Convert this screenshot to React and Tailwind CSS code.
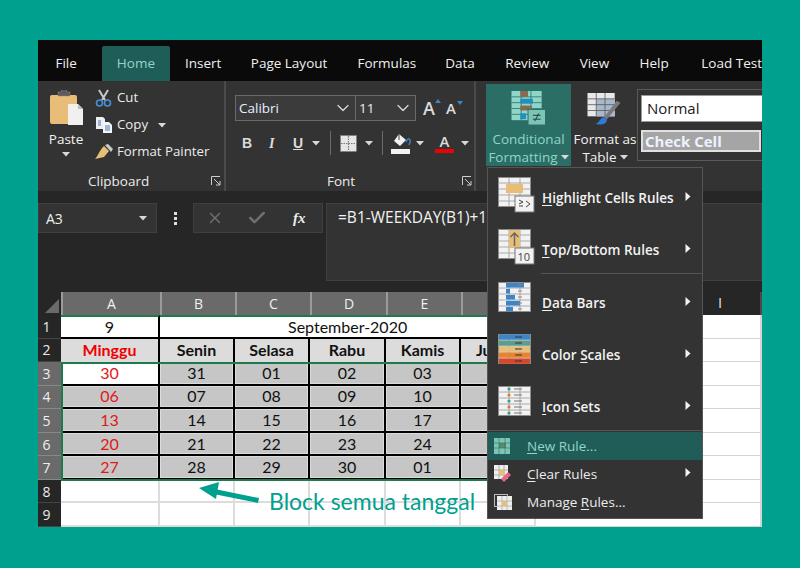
import { ChevronDown, Check, X } from "lucide-react";

const uiFont = "font-['Open_Sans','Noto_Sans',sans-serif]";
const sheetFont = "font-['Lato','Liberation_Sans',sans-serif]";

const Caret = ({ className = "" }) => (
  <svg width="8" height="5" viewBox="0 0 8 5" className={className}>
    <path d="M0 0h8L4 4.5z" fill="#d8d8d8" />
  </svg>
);

const SubArrow = () => (
  <svg width="6" height="10" viewBox="0 0 6 10" className="absolute left-[197px] top-1/2 -translate-y-[65%]">
    <path d="M0.5 0.5L5.5 5L0.5 9.5z" fill="#f2f2f2" />
  </svg>
);

const Launcher = ({ className = "" }) => (
  <svg width="10" height="10" viewBox="0 0 10 10" className={className}>
    <path d="M0.5 9V.5H9M3 3l6 6M9 5v4H5" fill="none" stroke="#cfcfcf" strokeWidth="1" />
  </svg>
);

const PasteIcon = () => (
  <svg width="34" height="36" viewBox="0 0 34 36">
    <rect x="1" y="5" width="27" height="29" rx="2" fill="#e8bd78" />
    <path d="M9 6V2h3a3 3 0 0 1 6 0h3v4z" fill="#5b5b5b" stroke="#888" strokeWidth="0.5" />
    <path d="M19 14h10l5 5v16H19z" fill="#f0f0f0" />
    <path d="M29 14v5h5" fill="#bdbdbd" />
  </svg>
);

const CutIcon = () => (
  <svg width="18" height="18" viewBox="0 0 18 18">
    <path d="M4 1l6 10M13 1L7 11" stroke="#c9c9c9" strokeWidth="2" fill="none" />
    <circle cx="4.5" cy="14" r="3" fill="none" stroke="#4a90d9" strokeWidth="1.6" />
    <circle cx="12.5" cy="14" r="3" fill="none" stroke="#4a90d9" strokeWidth="1.6" />
  </svg>
);

const CopyIcon = () => (
  <svg width="18" height="18" viewBox="0 0 18 18">
    <path d="M1 1h7l2 2v10H1z" fill="#eee" />
    <path d="M3 5h3M3 7h3M3 9h3" stroke="#3d7fc4" strokeWidth="1.2" />
    <path d="M8 6h6l3 3v8H8z" fill="#f5f5f5" />
    <path d="M10 10h5M10 12h5M10 14h5" stroke="#3d7fc4" strokeWidth="1.2" />
  </svg>
);

const BrushIcon = () => (
  <svg width="20" height="16" viewBox="0 0 20 16">
    <path d="M10 2l5 5-5 6-9 2c3-3 4-8 9-13z" fill="#e8bd78" />
    <path d="M11 1l3-1 5 5-2 3z" fill="#c9c9c9" />
  </svg>
);

const BordersIcon = () => (
  <svg width="17" height="17" viewBox="0 0 17 17">
    <rect x="0.5" y="0.5" width="16" height="16" fill="#e6e6e6" />
    <path d="M8.5 1v15M1 8.5h15" stroke="#7a7a7a" strokeWidth="1.2" strokeDasharray="1.5 1" />
    <path d="M0.5 .5h16v16H.5z" fill="none" stroke="#7a7a7a" strokeDasharray="1.5 1" />
  </svg>
);

const FillIcon = () => (
  <svg width="20" height="21" viewBox="0 0 20 21">
    <path d="M8 1l7 6-6 6-6-5z" fill="#f2f2f2" />
    <path d="M8 1v6" stroke="#444" strokeWidth="1" />
    <path d="M15 9c1-3 3-4 4-2s-.5 3-1 5" stroke="#3d7fc4" strokeWidth="1.6" fill="none" />
    <rect x="0" y="16" width="19" height="5" fill="#f2f2f2" />
  </svg>
);

const GridCells = ({ rows = 5, cols = 3, size = 33, h = 30, children }) => {
  const cw = size / cols;
  const ch = h / rows;
  const lines = [];
  for (let i = 1; i < cols; i++) lines.push(<path key={"c" + i} d={`M${cw * i} 0V${h}`} stroke="#9a9a9a" strokeWidth="0.8" />);
  for (let i = 1; i < rows; i++) lines.push(<path key={"r" + i} d={`M0 ${ch * i}H${size}`} stroke="#9a9a9a" strokeWidth="0.8" />);
  return (
    <svg width={size + 3} height={h + 6} viewBox={`0 0 ${size + 3} ${h + 6}`} className="overflow-visible">
      <rect x="0.5" y="0.5" width={size - 1} height={h - 1} fill="#f2f2f2" stroke="#8c8c8c" />
      {lines}
      {children}
    </svg>
  );
};

const HighlightIcon = () => (
  <GridCells>
    <rect x="8" y="7" width="17" height="9" fill="#e8bd78" />
    <rect x="17" y="19" width="19" height="16" fill="#f2f2f2" stroke="#777" />
    <path d="M21 23l4 2-4 2M21 29h4M28 24l4 3-4 3" stroke="#444" strokeWidth="1" fill="none" />
  </GridCells>
);

const TopBottomIcon = () => (
  <GridCells>
    <rect x="11" y="1" width="11" height="18" fill="#e8bd78" />
    <path d="M16.5 17V4M12.5 8l4-4 4 4" stroke="#666" strokeWidth="1.5" fill="none" />
    <rect x="17" y="19" width="19" height="16" fill="#f2f2f2" stroke="#777" />
    <text x="19.5" y="32" fontSize="11" fill="#444" fontFamily="Open Sans">10</text>
  </GridCells>
);

const DataBarsIcon = () => (
  <GridCells>
    {[[1, 18], [7, 4], [13, 9], [19, 14], [25, 7]].map(([y, w]) => (
      <rect key={y} x="8" y={y} width={w} height="4.5" fill="#3d85c6" />
    ))}
    {[3, 9, 15, 21, 27].map((y) => (
      <path key={y} d={`M20 ${y}h4`} stroke="#888" strokeWidth="1" />
    ))}
  </GridCells>
);

const ColorScalesIcon = () => (
  <GridCells>
    {[["#3d85c6", 0], ["#5c9e8d", 6], ["#e8bd78", 12], ["#e8842c", 18], ["#d9472b", 24]].map(([c, y]) => (
      <g key={y}>
        <rect x="1" y={y + 0.5} width="31" height="5.2" fill={c} />
        <path d={`M17 ${y + 3}h7`} stroke="#333" strokeWidth="1" />
      </g>
    ))}
  </GridCells>
);

const IconSetsIcon = () => (
  <GridCells>
    {[["#3f9c83", 3], ["#e8752c", 9], ["#3f9c83", 15], ["#e8752c", 21], ["#3f9c83", 27]].map(([c, y]) => (
      <g key={y}>
        <circle cx="11" cy={y} r="1.6" fill={c} />
        <path d={`M16 ${y}h8`} stroke="#777" strokeWidth="1" />
      </g>
    ))}
  </GridCells>
);

const TabItem = ({ label, className = "" }) => (
  <div className={`h-[35px] flex items-center justify-center ${className}`}>{label}</div>
);

const ClipboardGroup = () => (
  <div className="w-[188px] h-full relative flex border-r-2 border-[#4a4a4a] shrink-0">
    <div className="w-[56px] pt-[9px] flex flex-col items-center">
      <PasteIcon />
      <div className="mt-[4px] text-[13.5px] leading-[18px] text-[#f2f2f2]">Paste</div>
      <Caret className="mt-[4px]" />
    </div>
    <div className="pt-[7px] flex flex-col gap-[7px] text-[13.25px] text-[#ececec] ml-[1px]">
      <div className="flex items-center gap-[4px] h-[20px]"><CutIcon /> Cut</div>
      <div className="flex items-center gap-[4px] h-[20px]"><CopyIcon /> Copy <Caret className="ml-[6px]" /></div>
      <div className="flex items-center gap-[3px] h-[20px] -ml-[1px] whitespace-nowrap"><BrushIcon /> Format Painter</div>
    </div>
    <div className="absolute left-[50px] bottom-0 text-[13.5px] text-[#ececec]">Clipboard</div>
    <Launcher className="absolute left-[173px] bottom-[5px]" />
  </div>
);

const FontGroup = () => (
  <div className="w-[250px] h-full relative border-r-2 border-[#4a4a4a] shrink-0 pl-[9px] pt-[14px]">
    <div className="flex items-center h-[26px]">
      <div className="w-[121px] h-full border border-[#6a6a6a] bg-[#3b3b3b] flex items-center justify-between pl-[3px] pr-[2px]">
        <span className="text-[13.5px] text-[#e8f0ff]">Calibri</span>
        <ChevronDown size={20} color="#d8d8d8" strokeWidth={1.5} />
      </div>
      <div className="w-[60px] h-full border border-l-0 border-[#6a6a6a] bg-[#3b3b3b] flex items-center justify-between pl-[3px] pr-[2px]">
        <span className="text-[13.5px] text-[#e8f0ff]">11</span>
        <ChevronDown size={20} color="#d8d8d8" strokeWidth={1.5} />
      </div>
      <div className="ml-[7px] text-[18px] font-semibold text-[#dcdcdc] relative">
        A<span className="absolute -right-[6px] top-[4px] w-0 h-0 border-x-[3px] border-x-transparent border-b-[4px] border-b-[#3d85c6]" />
      </div>
      <div className="ml-[11px] text-[15px] font-semibold text-[#dcdcdc] relative">
        A<span className="absolute -right-[7px] top-[4px] w-0 h-0 border-x-[3px] border-x-transparent border-t-[4px] border-t-[#3d85c6]" />
      </div>
    </div>
    <div className="flex items-center h-[26px] mt-[9px] text-[#dcdcdc]">
      <span className="ml-[7px] w-[25px] font-bold text-[14px] font-['Liberation_Sans']">B</span>
      <span className="w-[26px] pl-[2px] italic font-bold text-[14px] font-['Liberation_Serif']">I</span>
      <span className="w-[17px] underline font-bold text-[14px] font-['Liberation_Sans']">U</span>
      <Caret className="ml-[2px]" />
      <div className="w-px h-[24px] bg-[#6a6a6a] ml-[10px]" />
      <div className="ml-[9px]"><BordersIcon /></div>
      <Caret className="ml-[8px]" />
      <div className="w-px h-[24px] bg-[#6a6a6a] ml-[9px]" />
      <div className="ml-[8px]"><FillIcon /></div>
      <Caret className="ml-[5px]" />
      <div className="ml-[11px] w-[19px] flex flex-col items-center">
        <span className="font-semibold text-[15px] leading-[16px]">A</span>
        <span className="w-[19px] h-[4px] bg-[#f00000]" />
      </div>
      <Caret className="ml-[7px]" />
    </div>
    <div className="absolute left-[101px] bottom-0 text-[13.5px] text-[#ececec]">Font</div>
    <Launcher className="absolute left-[236px] bottom-[5px]" />
  </div>
);

const CondIcon = () => (
  <svg width="36" height="36" viewBox="0 0 36 36">
    <rect x="0" y="0" width="31" height="30" fill="#8fd6c8" />
    <path d="M10 0v30M20 0v30M0 6h31M0 12h31M0 18h31M0 24h31" stroke="#2b6e66" strokeWidth="0.8" />
    <rect x="9" y="0" width="8" height="6" fill="#8a6a4f" />
    <rect x="9" y="8" width="13" height="5" fill="#1f8fc4" />
    <rect x="9" y="15" width="12" height="5" fill="#8a6a4f" />
    <rect x="9" y="23" width="6" height="6" fill="#1f8fc4" />
    <rect x="17" y="19" width="18" height="16" fill="#7cc4b6" stroke="#2b6e66" />
    <path d="M22 25h8M22 29h8M28 23l-4 8" stroke="#1c3f3b" strokeWidth="1" />
  </svg>
);

const TableIcon = () => (
  <svg width="36" height="36" viewBox="0 0 36 36">
    <rect x="0" y="0" width="28" height="24" fill="#e8e8e8" />
    <rect x="9" y="6" width="19" height="18" fill="#a9b8cc" />
    <path d="M9 0v24M18 0v24M0 6h28M0 12h28M0 18h28" stroke="#555" strokeWidth="0.8" />
    <path d="M34 10L20 27l-3-2L30 8z" fill="#7a7a7a" />
    <path d="M17 25c-4 0-4 5-9 7 5 1 12 1 12-5z" fill="#2f7bd6" />
  </svg>
);

const StylesGroup = () => (
  <div className="flex-1 h-full flex min-w-0 ml-[10px] pt-[3px]">
    <div className="w-[85px] h-[82px] bg-[#2b6e66] flex flex-col items-center pt-[7px] text-[#8fd6c8] text-[13.5px] leading-[18px] shrink-0">
      <CondIcon />
      <div className="mt-[4px]">Conditional</div>
      <div className="flex items-center gap-[3px]">Formatting <Caret /></div>
    </div>
    <div className="w-[64px] h-[82px] flex flex-col items-center pt-[9px] text-[#f2f2f2] text-[13.5px] leading-[18px] shrink-0 ml-[2px]">
      <TableIcon />
      <div className="mt-[2px] whitespace-nowrap">Format as</div>
      <div className="flex items-center gap-[3px]">Table <Caret /></div>
    </div>
    <div className="flex-1 mt-[5px] h-[72px] border border-[#5a5a5a] border-r-0 pl-[3px] pt-[5px] min-w-0">
      <div className="h-[27px] bg-white border border-[#999] border-r-0 flex items-center pl-[5px] text-[#1a1a1a] text-[15px]">Normal</div>
      <div className="mt-[8px] h-[22px] mr-[1px] bg-[#a5a5a5] border-2 border-double border-[#e0e0e0] flex items-center pl-[2px] text-[#eef2ff] text-[15px] font-bold">Check Cell</div>
    </div>
  </div>
);

const colWidths = [99, 75, 75, 76, 75, 75];
const letters = ["A", "B", "C", "D", "E", "F"];
const sheetCols = "grid grid-cols-[23px_99px_75px_75px_76px_75px_75px_1fr]";

const RowHead = ({ n, active }) => (
  <div className={`flex items-center justify-center pr-[6px] text-[14px] ${uiFont} ${active ? "bg-[#6a6a6a] text-[#f0f0f0] border-b border-[#888]" : "bg-[#262626] text-[#ececec] border-b border-[#444]"}`}>{n}</div>
);

const week = [
  ["30", "31", "01", "02", "03", "04"],
  ["06", "07", "08", "09", "10", "11"],
  ["13", "14", "15", "16", "17", "18"],
  ["20", "21", "22", "23", "24", "25"],
  ["27", "28", "29", "30", "01", "02"],
];

const Sheet = () => (
  <div className={`relative flex-1 ${sheetFont}`}>
    <div className={`${sheetCols} h-[23px] bg-[#262626]`}>
      <div className="bg-[#262626] relative">
        <span className="absolute right-[2px] bottom-[2px] w-0 h-0 border-l-[14px] border-l-transparent border-b-[14px] border-b-[#6a6a6a]" />
      </div>
      {letters.map((l) => (
        <div key={l} className={`bg-[#6a6a6a] border-l-2 border-[#9a9a9a] flex items-center justify-center text-[14px] text-[#f0f0f0] ${uiFont}`}>{l}</div>
      ))}
      <div className="flex items-center justify-end pr-[38px] text-[#ddd] text-[13px] border-r-2 border-[#4a4a4a]"><span>I</span></div>
    </div>
    <div className={`${sheetCols} grid-rows-[repeat(9,23.55px)] bg-white text-[16px] text-[#111]`}>
      <RowHead n="1" active={false} />
      <div className="flex items-center justify-center border-r-2 border-b-2 border-black border-t-2 border-t-[#1c7a4c]">9</div>
      <div className="col-span-5 flex items-center border-b-2 border-black border-t-2 border-t-[#1c7a4c] pl-[128px]">September-2020</div>
      <div className="border-b border-r-2 border-[#d4d4d4]" />

      <RowHead n="2" active={false} />
      <div className="flex items-center justify-center bg-[#dcdcdc] border-r-2 border-black font-bold text-[#f00000]">Minggu</div>
      {["Senin", "Selasa", "Rabu", "Kamis", "Jumat"].map((d) => (
        <div key={d} className="flex items-center justify-center bg-[#dcdcdc] border-r-2 border-black font-bold">{d}</div>
      ))}
      <div className="border-b border-r-2 border-[#d4d4d4]" />

      {week.map((row, i) => [
        <RowHead key={"h" + i} n={i + 3} active />,
        ...row.map((v, j) => (
          <div
            key={i + "-" + j}
            className={`flex items-center justify-center border-r-2 border-b-2 border-black ${j === 0 ? "text-[#e01818]" : ""} ${i === 0 && j === 0 ? "bg-white" : "bg-[#c6c6c6] shadow-[inset_0_0_0_1px_#dcdcdc]"}`}
          >
            {v}
          </div>
        )),
        <div key={"e" + i} className="border-b border-r-2 border-[#d4d4d4]" />,
      ])}

      {[8, 9].map((n) => [
        <RowHead key={"h" + n} n={n} active={false} />,
        ...colWidths.map((w, k) => <div key={n + "c" + k} className="border-r-2 border-b-2 border-[#dcdcdc]" />),
        <div key={n + "e"} className="border-b border-r-2 border-[#d4d4d4]" />,
      ])}
    </div>

    {/* selection A3:... */}
    <div className="absolute left-[23px] top-[70px] w-[440px] h-[119px] border-2 border-[#1c7a4c] pointer-events-none" />

    {/* annotation */}
    <svg width="62" height="24" viewBox="0 0 62 24" className="absolute left-[160px] top-[190px]">
      <path d="M60.5 18.5L16 9.5" stroke="#00a08e" strokeWidth="5" />
      <path d="M1 6L21 0l-3 17z" fill="#00a08e" />
    </svg>
    <div className="absolute left-[231px] top-[196px] text-[23px] leading-[26px] text-[#00a08e] whitespace-nowrap">Block semua tanggal</div>
  </div>
);

const MenuBig = ({ icon, label }) => (
  <div className="relative h-[52px] flex items-center pl-[10px]">
    <div className="w-[44px] shrink-0 -mt-[6px]">{icon}</div>
    <div className="text-[#f2f2f2] text-[13.5px] font-semibold whitespace-nowrap">{label}</div>
    <SubArrow />
  </div>
);

const MenuSmall = ({ icon, label, active, arrow }) => (
  <div className={`relative h-[28px] flex items-center pl-[6px] text-[13.5px] whitespace-nowrap ${active ? "bg-[#205d58] text-[#8fd6c8]" : "text-[#ececec]"}`}>
    <div className="w-[33px] shrink-0 flex">{icon}</div>
    <div>{label}</div>
    {arrow && <SubArrow />}
  </div>
);

const Mnem = ({ children }) => <u className="underline-offset-2">{children}</u>;

const NewRuleIcon = () => (
  <svg width="16" height="16" viewBox="0 0 16 16">
    <rect width="16" height="16" fill="#7cc4b6" />
    <rect x="5" y="5" width="7" height="5" fill="#5c8a6a" />
    <path d="M5 0v16M11 0v16M0 5h16M0 10h16" stroke="#2b6e66" strokeWidth="0.6" />
  </svg>
);

const ClearRulesIcon = () => (
  <svg width="18" height="18" viewBox="0 0 18 18">
    <rect width="14" height="14" fill="#eee" />
    <path d="M5 0v14M10 0v14M0 5h14M0 10h14" stroke="#888" strokeWidth="0.6" />
    <rect x="5" y="5" width="6" height="5" fill="#e8bd78" />
    <path d="M14 7l3 3-7 7-3-3z" fill="#e0688a" />
  </svg>
);

const ManageRulesIcon = () => (
  <svg width="18" height="16" viewBox="0 0 18 16">
    <rect x="0.5" y="0.5" width="13" height="12" fill="none" stroke="#bbb" />
    <rect x="3" y="2" width="15" height="14" fill="#eee" />
    <path d="M8 2v14M13 2v14M3 7h15M3 12h15" stroke="#999" strokeWidth="0.6" />
    <rect x="8" y="7" width="5" height="5" fill="#e8bd78" />
  </svg>
);

const CondMenu = () => (
  <div className={`absolute left-[449px] top-[127px] w-[216px] h-[352px] bg-[#333] border border-[#555] pt-[4px] ${uiFont}`}>
    <MenuBig icon={<HighlightIcon />} label={<><Mnem>H</Mnem>ighlight Cells Rules</>} />
    <MenuBig icon={<TopBottomIcon />} label={<><Mnem>T</Mnem>op/Bottom Rules</>} />
    <div className="h-px bg-[#555] ml-[53px] mt-[-3px] mb-[3px]" />
    <MenuBig icon={<DataBarsIcon />} label={<><Mnem>D</Mnem>ata Bars</>} />
    <MenuBig icon={<ColorScalesIcon />} label={<>Color <Mnem>S</Mnem>cales</>} />
    <MenuBig icon={<IconSetsIcon />} label={<><Mnem>I</Mnem>con Sets</>} />
    <div className="h-px bg-[#555] -mt-[3px] mb-[1px]" />
    <MenuSmall active icon={<NewRuleIcon />} label={<><Mnem>N</Mnem>ew Rule...</>} />
    <MenuSmall arrow icon={<ClearRulesIcon />} label={<><Mnem>C</Mnem>lear Rules</>} />
    <MenuSmall icon={<ManageRulesIcon />} label={<>Manage <Mnem>R</Mnem>ules...</>} />
  </div>
);

const App = () => (
  <div className="w-[800px] h-[568px] bg-[#00a08e] pt-[40px] pl-[38px]">
    <div className={`relative w-[724px] h-[487px] flex flex-col overflow-hidden bg-[#262626] ${uiFont}`}>
      {/* tabs */}
      <div className="h-[41px] shrink-0 bg-[#0a0a0a] flex items-end text-[13.5px] text-[#f0f0f0] whitespace-nowrap">
        <TabItem label="File" className="w-[65px] pr-[8px]" />
        <TabItem label="Home" className="w-[68px] bg-[#1f5e58] text-[#8fd6c8] rounded-t-[2px]" />
        <TabItem label="Insert" className="w-[68px]" />
        <TabItem label="Page Layout" className="w-[106px]" />
        <TabItem label="Formulas" className="w-[92px]" />
        <TabItem label="Data" className="w-[56px]" />
        <TabItem label="Review" className="w-[80px]" />
        <TabItem label="View" className="w-[56px]" />
        <TabItem label="Help" className="w-[65px]" />
        <TabItem label="Load Test" className="pl-[15px]" />
      </div>

      {/* ribbon */}
      <div className="h-[110px] shrink-0 bg-[#333] flex">
        <ClipboardGroup />
        <FontGroup />
        <StylesGroup />
      </div>

      {/* formula bar */}
      <div className="h-[101px] shrink-0 bg-[#262626] flex pt-[12px]">
        <div className="w-[119px] h-[30px] bg-[#333] border border-[#3f3f3f] flex items-center justify-between pl-[7px] pr-[9px] text-[14px] text-[#f0f0f0]">
          A3 <Caret />
        </div>
        <div className="w-[36px] h-[30px] flex flex-col items-center justify-center gap-[2px]">
          <span className="w-[3px] h-[3px] bg-[#e0e0e0]" />
          <span className="w-[3px] h-[3px] bg-[#e0e0e0]" />
          <span className="w-[3px] h-[3px] bg-[#e0e0e0]" />
        </div>
        <div className="w-[130px] h-[30px] bg-[#333] border border-[#3f3f3f] flex items-center text-[#6f6f6f]">
          <X size={18} strokeWidth={2} className="ml-[12px]" />
          <Check size={20} strokeWidth={3} className="ml-[23px]" />
          <span className="ml-[26px] text-[#ececec] italic font-bold text-[15px] font-['Liberation_Serif']">fx</span>
        </div>
        <div className="flex-1 h-[78px] ml-[3px] bg-[#333] border border-[#3f3f3f] pl-[11px] pt-[2px] text-[15.5px] text-[#f2f2f2] whitespace-nowrap overflow-hidden">
          =B1-WEEKDAY(B1)+1
        </div>
      </div>

      <Sheet />
      <CondMenu />
    </div>
  </div>
);

export default App;
